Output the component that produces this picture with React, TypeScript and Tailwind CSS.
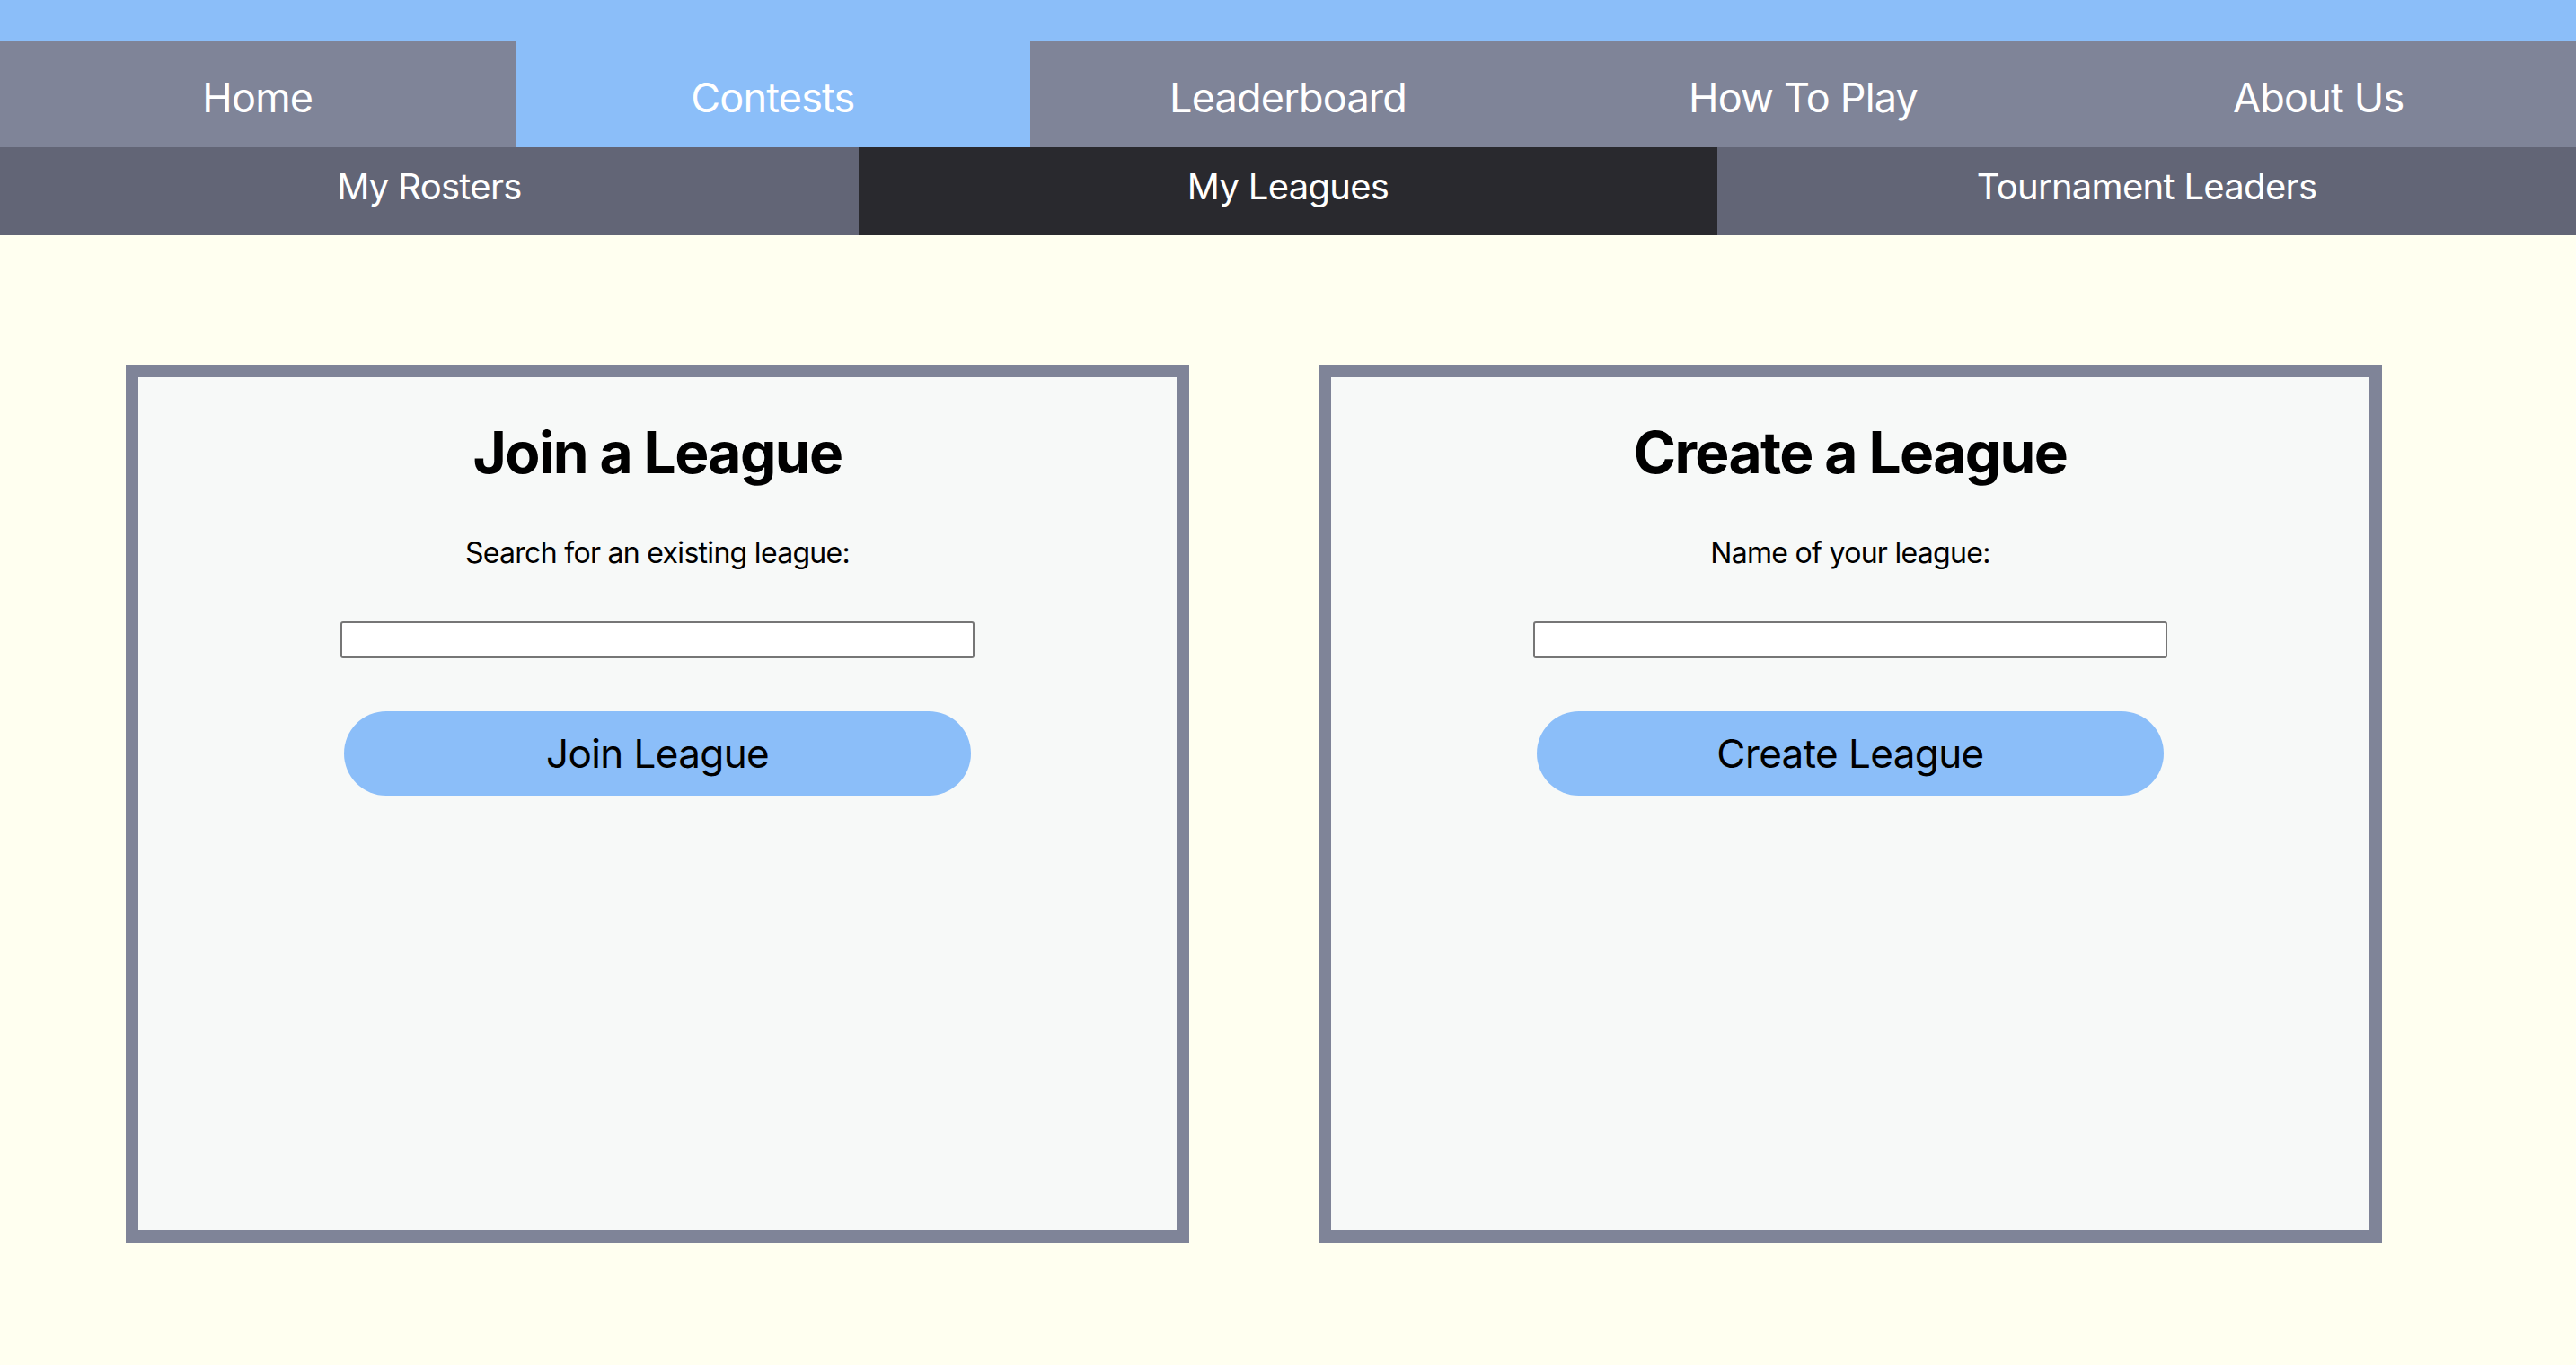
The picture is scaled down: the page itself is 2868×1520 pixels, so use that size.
const mainTabs = ["Home", "Contests", "Leaderboard", "How To Play", "About Us"];
const subTabs = ["My Rosters", "My Leagues", "Tournament Leaders"];

function LeagueCard({ title, label, button }: { title: string; label: string; button: string }) {
  return (
    <div className="w-[1184px] h-[978px] border-[14px] border-[#7f8498] bg-[#f7f9f8] flex flex-col items-center pt-[52px]">
      <h2 className="text-[64px] leading-none font-bold text-black tracking-[-1.6px]">{title}</h2>
      <label className="mt-[64px] text-[32px] leading-none text-black tracking-[-0.7px]">{label}</label>
      <input
        type="text"
        className="mt-[60px] w-[706px] h-[41px] bg-white border-2 border-[#767676] rounded-[3px]"
      />
      <button className="mt-[59px] w-[698px] h-[94px] rounded-full bg-[#8bbef9] text-[44px] text-black tracking-[-0.6px]">
        {button}
      </button>
    </div>
  );
}

export default function App() {
  return (
    <div className="min-h-screen bg-[#fffff0] font-['Inter',sans-serif]">
      <header>
        <div className="h-[46px] bg-[#8bbef9]" />
        <nav className="grid grid-cols-5 h-[118px] bg-[#7f8498]">
          {mainTabs.map((t) => (
            <div
              key={t}
              className={
                "flex items-center justify-center pt-2 text-white text-[45px] tracking-[-0.8px] " +
                (t === "Contests" ? "bg-[#8bbef9]" : "")
              }
            >
              {t}
            </div>
          ))}
        </nav>
        <nav className="grid grid-cols-3 h-[98px] bg-[#626576]">
          {subTabs.map((t) => (
            <div
              key={t}
              className={
                "flex items-center justify-center pb-[10px] text-white text-[40px] tracking-[-0.7px] " +
                (t === "My Leagues" ? "bg-[#29292e]" : "")
              }
            >
              {t}
            </div>
          ))}
        </nav>
      </header>
      <main className="flex gap-[144px] pl-[140px] pt-[144px]">
        <LeagueCard title="Join a League" label="Search for an existing league:" button="Join League" />
        <LeagueCard title="Create a League" label="Name of your league:" button="Create League" />
      </main>
    </div>
  );
}
